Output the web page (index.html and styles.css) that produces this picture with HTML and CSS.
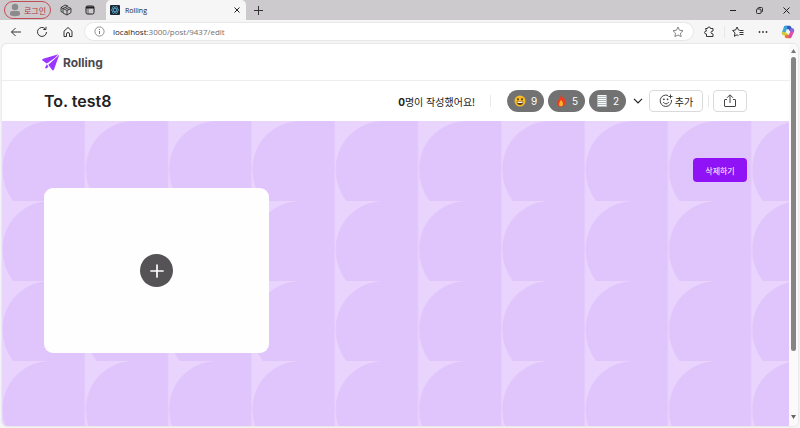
FILE: index.html
```html
<!DOCTYPE html>
<html lang="ko">
<head>
<meta charset="utf-8">
<title>Rolling</title>
<link rel="stylesheet" href="styles.css">
</head>
<body>
<header class="tabbar">
  <button class="profile" type="button">
    <svg width="12" height="14" viewBox="0 0 12 14" fill="#8c8a8c"><circle cx="6" cy="4" r="3.2"/><path d="M1 12V10q0-2 2-2h6q2 0 2 2v2q-5 2.600-10 0z"/></svg>
    <span>로그인</span>
  </button>
  <button class="tool" type="button" aria-label="작업 영역">
    <svg width="12" height="12" viewBox="0 0 12 12" fill="none" stroke="#303030" stroke-width=".9"><path d="M2.500 8.500 1 7.500V3.500L5 1l3 1M1 3.500l2 1"/><path d="M3 4.500 7 2.500l4 2v4L7 11 3 9zM3 4.500l4 2V11M7 6.500l4-2M5 3.500l4 2"/></svg>
  </button>
  <button class="tool" type="button" aria-label="탭 작업 메뉴">
    <svg width="10" height="10" viewBox="0 0 10 10" fill="none" stroke="#222"><rect x="1" y="1" width="8" height="8" rx="1.500"/><path d="M1 2.500h8" stroke-width="2"/><path d="M3 3v6" stroke-width=".6"/></svg>
  </button>
  <div class="tab">
    <svg width="10" height="10" viewBox="0 0 10 10"><rect width="10" height="10" rx="1" fill="#1d2733"/><g fill="none" stroke="#61b9d8" stroke-width=".6"><ellipse cx="5" cy="5" rx="4" ry="1.500"/><ellipse cx="5" cy="5" rx="4" ry="1.500" transform="rotate(60 5 5)"/><ellipse cx="5" cy="5" rx="4" ry="1.500" transform="rotate(120 5 5)"/></g></svg>
    <span>Rolling</span>
    <button type="button" aria-label="탭 닫기"><svg width="6" height="6" viewBox="0 0 6 6" stroke="#222"><path d="M.5.5l5 5M5.500.5l-5 5"/></svg></button>
  </div>
  <button class="newtab" type="button" aria-label="새 탭"><svg width="9" height="9" viewBox="0 0 9 9" stroke="#333"><path d="M4.500 0v9M0 4.500h9"/></svg></button>
  <div class="window-buttons">
    <button type="button" aria-label="최소화"><svg width="6" height="6" viewBox="0 0 6 6" stroke="#222"><path d="M0 3.500h6"/></svg></button>
    <button type="button" aria-label="이전 크기로"><svg width="7" height="7" viewBox="0 0 7 7" fill="none" stroke="#222" stroke-width=".9"><rect x=".5" y="2" width="4.500" height="4.500" rx="1"/><path d="M2 2V1.500Q2 .5 3 .5h2.500q1 0 1 1V4q0 1-1 1"/></svg></button>
    <button type="button" aria-label="닫기"><svg width="7" height="7" viewBox="0 0 7 7" stroke="#222"><path d="M.5.5l6 6M6.500.5l-6 6"/></svg></button>
  </div>
</header>

<nav class="toolbar">
  <div class="nav-buttons">
    <button type="button" aria-label="뒤로"><svg width="12" height="12" viewBox="0 0 12 12" fill="none" stroke="#333"><path d="M11 6H1.500M5.500 2l-4 4 4 4"/></svg></button>
    <button type="button" aria-label="새로 고침"><svg width="12" height="12" viewBox="0 0 12 12" fill="none" stroke="#333"><path d="M10.500 6A4.500 4.500 0 1 1 9 2.600M10 .8v2.700H7.300"/></svg></button>
    <button type="button" aria-label="홈"><svg width="12" height="12" viewBox="0 0 12 12" fill="none" stroke="#333"><path d="M2 5.200 6 1.500l4 3.700v5.300H7.500V8q0-1.500-1.500-1.500T4.500 8v2.500H2z" stroke-linejoin="round"/></svg></button>
  </div>
  <div class="address">
    <svg width="11" height="11" viewBox="0 0 11 11" fill="none" stroke="#777"><circle cx="5.500" cy="5.500" r="4.600" stroke-width=".8"/><path d="M5.500 5v3M5.500 3v1"/></svg>
    <div class="url"><b>localhost</b>:3000/post/9437/edit</div>
    <svg width="12" height="12" viewBox="0 0 12 12" fill="none" stroke="#777" stroke-width=".9"><path d="m6 1 1.500 3.200 3.500.5-2.500 2.400.6 3.500L6 9l-3.100 1.600.6-3.500L1 4.700l3.500-.5z"/></svg>
  </div>
  <div class="extensions">
    <button type="button" aria-label="확장"><svg width="12" height="12" viewBox="0 0 12 12" fill="none" stroke="#333"><path d="M2.500 2.500H4.500q0-1.500 1.500-1.500t1.500 1.500h2.500v2.500q-2 0-2 1.500t2 1.500v2.500H3.500V8Q1.500 8 1.500 6.500T3.500 5z" stroke-linejoin="round"/></svg></button>
    <i class="rule"></i>
    <button type="button" aria-label="즐겨찾기"><svg width="12" height="12" viewBox="0 0 12 12" fill="none" stroke="#333"><path d="M7.500 4.200 6.500 4 5 1 3.600 4l-3 .5L3 6.800l-.6 3.500L5 8.800l1.500.8M7.500 4.500h4M7.500 6.500h4M7.500 8.500h4"/></svg></button>
    <button type="button" aria-label="설정"><svg width="10" height="4" viewBox="0 0 10 4" fill="#333"><circle cx="1.500" cy="2" r=".9"/><circle cx="5" cy="2" r=".9"/><circle cx="8.500" cy="2" r=".9"/></svg></button>
    <button type="button" aria-label="Copilot"><svg width="14" height="14" viewBox="0 0 14 14" fill="none" stroke-width="3.400" stroke-linecap="round" stroke-linejoin="round"><path d="M4.500 2.500h4L10 5" stroke="#315cc8"/><path d="M4.500 2.500 2.500 8" stroke="#39a9d8"/><path d="M2.500 8.500 5 9.500" stroke="#d7ca38"/><path d="M5.500 11.500h3" stroke="#ef7438"/><path d="M9 11.500 11.500 6" stroke="#d750a9"/><path d="M10.500 5h1" stroke="#8865df"/></svg></button>
  </div>
</nav>

<div class="viewport">
  <div class="page">
    <header class="site-header">
      <a class="logo" href="#">
        <svg width="18" height="17" viewBox="0 0 18 17" fill="#9935ff"><path d="M16.500.2 1.200 4.800Q-.5 5.600.8 6.800l4 2.700L12.800 4z"/><path d="M17.300.7 12 15.500q-.8 1.600-2 .3L6.300 10.800 13.300 4.500z"/><path d="m4.800 10.300 1.700 2.400-2.200 1.800q-1.300.1-1-1.300z"/></svg>
        <span>Rolling</span>
      </a>
    </header>
    <section class="post-header">
      <h1>To. test8</h1>
      <p class="writers"><b>0</b>명이 작성했어요!</p>
      <i class="rule"></i>
      <div class="reactions">
        <span class="pill"><svg width="12" height="12" viewBox="0 0 12 12"><circle cx="6" cy="6" r="5.500" fill="#f8bd26"/><ellipse cx="4" cy="4.300" rx=".8" ry="1.200" fill="#593916"/><ellipse cx="8" cy="4.300" rx=".8" ry="1.200" fill="#593916"/><path d="M2.600 6.500h6.800Q9 10 6 10T2.600 6.500z" fill="#593916"/><path d="M3.200 6.800h5.600L8.300 8H3.700z" fill="#fff"/></svg>9</span>
        <span class="pill"><svg width="12" height="12" viewBox="0 0 12 12"><path d="M5.500 0c3 2 2.300 3.500 3.200 4.200L9 3c3 4.500.8 8.700-3 8.700S.3 8 3.300 4.200l.5 1.300C5 4 5.500 2.500 5.500 0z" fill="#ed3e20"/><path d="M6 5c2.500 2.500 2.600 6.200 0 6.200S3.500 8.500 6 5z" fill="#ffb62c"/></svg>5</span>
        <span class="pill"><svg width="12" height="12" viewBox="0 0 12 12"><path fill="#fafafa" d="M1.500 0h9v12h-9z"/><path d="M2 1.500h8M2 3.500h8M2 5.500h8M2 7.500h8M2 9.500h8M2 11.500h8" stroke="#8d9ca0" stroke-width=".7"/></svg>2</span>
      </div>
      <button class="more" type="button" aria-label="더보기"><svg width="10" height="6" viewBox="0 0 10 6" fill="none" stroke="#222" stroke-width="1.200"><path d="m1 .8 4 4 4-4"/></svg></button>
      <button class="outline add" type="button"><svg width="14" height="14" viewBox="0 0 14 14" fill="none" stroke="#444"><path d="M9 1.500A5.700 5.700 0 1 0 12.500 6M4.200 8q2.800 3.800 5.600 0M11.500.5v4M9.500 2.500h4"/><circle cx="4.900" cy="5.300" r=".5" fill="#333"/><circle cx="8.600" cy="5.300" r=".5" fill="#333"/></svg>추가</button>
      <i class="rule share-rule"></i>
      <button class="outline share" type="button" aria-label="공유"><svg width="14" height="14" viewBox="0 0 14 14" fill="none" stroke="#444" stroke-linejoin="round"><path d="M4 5.500H2q-.5 0-.5.5v6q0 .5.500.5h10q.5 0 .5-.5V6q0-.5-.5-.5h-2M7 9V1M4 3.800l3-3 3 3"/></svg></button>
    </section>
    <main class="board">
      <svg class="pattern" aria-hidden="true"><defs><pattern id="petals" width="83.300" height="80" patternUnits="userSpaceOnUse"><path d="M48.500 0H82.800V80H11Q.5 66 .5 48A48 48 0 0 1 48.500 0z" fill="#e0c4fc"/></pattern></defs><rect width="100%" height="100%" fill="url(#petals)"/></svg>
      <div class="actions"><button class="delete" type="button">삭제하기</button></div>
      <div class="cards">
        <article class="card"><button type="button" aria-label="메시지 추가"><svg width="14" height="14" viewBox="0 0 14 14" stroke="#fff" stroke-width="1.700" stroke-linecap="round"><path d="M7 1v12M1 7h12"/></svg></button></article>
      </div>
    </main>
  </div>
  <div class="scrollbar" aria-hidden="true">
    <svg width="5" height="4" viewBox="0 0 5 4" fill="#777"><path d="M2.500 0 5 4H0z"/></svg>
    <div class="track"><div class="thumb"></div></div>
    <svg width="5" height="4" viewBox="0 0 5 4" fill="#666"><path d="M2.500 4 5 0H0z"/></svg>
  </div>
</div>
</body>
</html>
```

FILE: styles.css
```css
* { box-sizing: border-box; }

body {
  display: flex;
  flex-direction: column;
  height: 100vh;
  margin: 0;
  overflow: hidden;
  background: #f6f6f7;
  color: #222;
  font-family: Inter, "Noto Sans CJK KR", sans-serif;
}

button {
  display: flex;
  align-items: center;
  justify-content: center;
  flex-shrink: 0;
  margin: 0;
  padding: 0;
  border: 0;
  background: none;
  color: inherit;
  font: inherit;
}

svg { display: block; flex-shrink: 0; }

.tabbar {
  display: flex;
  align-items: center;
  flex-shrink: 0;
  height: 20px;
  padding-left: 4px;
  background: #cccacc;
  font-family: "Open Sans", "Noto Sans CJK KR", sans-serif;
  font-size: 7px;
}

.profile {
  gap: 3px;
  width: 47px;
  height: 18px;
  border: 1px solid #c34d57;
  border-radius: 9px;
  color: #b8323e;
  font-size: 8px;
}

.tool { width: 24px; }
.profile + .tool { margin-left: 3px; }

.tab {
  display: flex;
  align-items: center;
  gap: 5px;
  align-self: flex-end;
  width: 140px;
  height: 20px;
  margin-left: 4px;
  padding: 0 6px 0 4px;
  border-radius: 5px 5px 0 0;
  background: #f6f6f7;
}

.tab span { flex: 1; }
.newtab { width: 25px; }

.window-buttons {
  display: flex;
  margin-left: auto;
}

.window-buttons button { width: 27px; }

.toolbar {
  display: flex;
  align-items: center;
  flex-shrink: 0;
  height: 23px;
}

.nav-buttons { display: flex; padding: 0 3px; }
.nav-buttons button { width: 26px; }

.address {
  display: flex;
  align-items: center;
  flex: 1;
  gap: 8px;
  height: 19px;
  padding: 0 9px;
  border: 1px solid #e7e7e8;
  border-radius: 10px;
  background: #fff;
}

.url {
  flex: 1;
  color: #707070;
  font-family: "Open Sans", sans-serif;
  font-size: 8px;
}

.url b { color: #222; font-weight: 400; }

.extensions { display: flex; align-items: center; }
.extensions button { width: 25px; }
.extensions > button:first-child { width: 30px; }

.rule {
  flex-shrink: 0;
  width: 1px;
  height: 12px;
  background: #e8e8ea;
}

.viewport {
  display: flex;
  flex: 1;
  min-height: 0;
  margin: 1px 2px 2px;
  border-radius: 5px;
  overflow: hidden;
  background: #fff;
  box-shadow: 0 0 2px #c8c8ca;
}

.page {
  display: flex;
  flex: 1;
  flex-direction: column;
  min-width: 0;
}

.site-header {
  display: flex;
  align-items: center;
  flex-shrink: 0;
  height: 37px;
  padding: 0 40px;
  border-bottom: 1px solid #ededf0;
}

.logo {
  display: flex;
  align-items: center;
  gap: 3px;
  color: #4a494f;
  font-size: 12px;
  font-weight: 700;
  text-decoration: none;
}

.post-header {
  display: flex;
  align-items: center;
  flex-shrink: 0;
  height: 40px;
  padding: 0 42px;
}

h1 {
  flex: 1;
  margin: 0;
  font-size: 16px;
  font-weight: 600;
}

.writers {
  margin: 0 15px 0 0;
  font-size: 10px;
}

.reactions { display: flex; gap: 4px; margin-left: 16px; }

.pill {
  display: flex;
  align-items: center;
  justify-content: center;
  gap: 5px;
  width: 37px;
  height: 22px;
  border-radius: 11px;
  background: #727272;
  color: #fff;
  font-size: 10px;
}

.more { width: 23px; height: 22px; }

.outline {
  height: 22px;
  border: 1px solid #dadadd;
  border-radius: 4px;
  font-size: 10px;
}

.add { gap: 2px; width: 54px; }
.share-rule { margin: 0 4px 0 5px; }
.share { width: 34px; }

.board {
  position: relative;
  flex: 1;
  padding: 37px 42px;
  background: #e9d4fe;
}

.pattern {
  position: absolute;
  inset: 0;
  width: 100%;
  height: 100%;
}

.actions, .cards { position: relative; }
.actions { display: flex; justify-content: flex-end; }

.delete {
  width: 54px;
  height: 24px;
  border-radius: 4px;
  background: #9013f5;
  color: #fff;
  font-size: 8px;
}

.cards {
  display: grid;
  grid-template-columns: repeat(3, 1fr);
  gap: 14px;
  margin-top: 6px;
}

.card {
  display: flex;
  align-items: center;
  justify-content: center;
  height: 165px;
  border-radius: 9px;
  background: #fffeff;
}

.card button {
  width: 33px;
  height: 33px;
  border-radius: 50%;
  background: #555355;
}

.scrollbar {
  display: flex;
  flex-direction: column;
  align-items: center;
  gap: 4px;
  width: 9px;
  padding: 5px 0 7px;
  background: #fbfafb;
}

.track { flex: 1; width: 5px; }

.thumb {
  height: 83%;
  border-radius: 3px;
  background: #858585;
}
```
